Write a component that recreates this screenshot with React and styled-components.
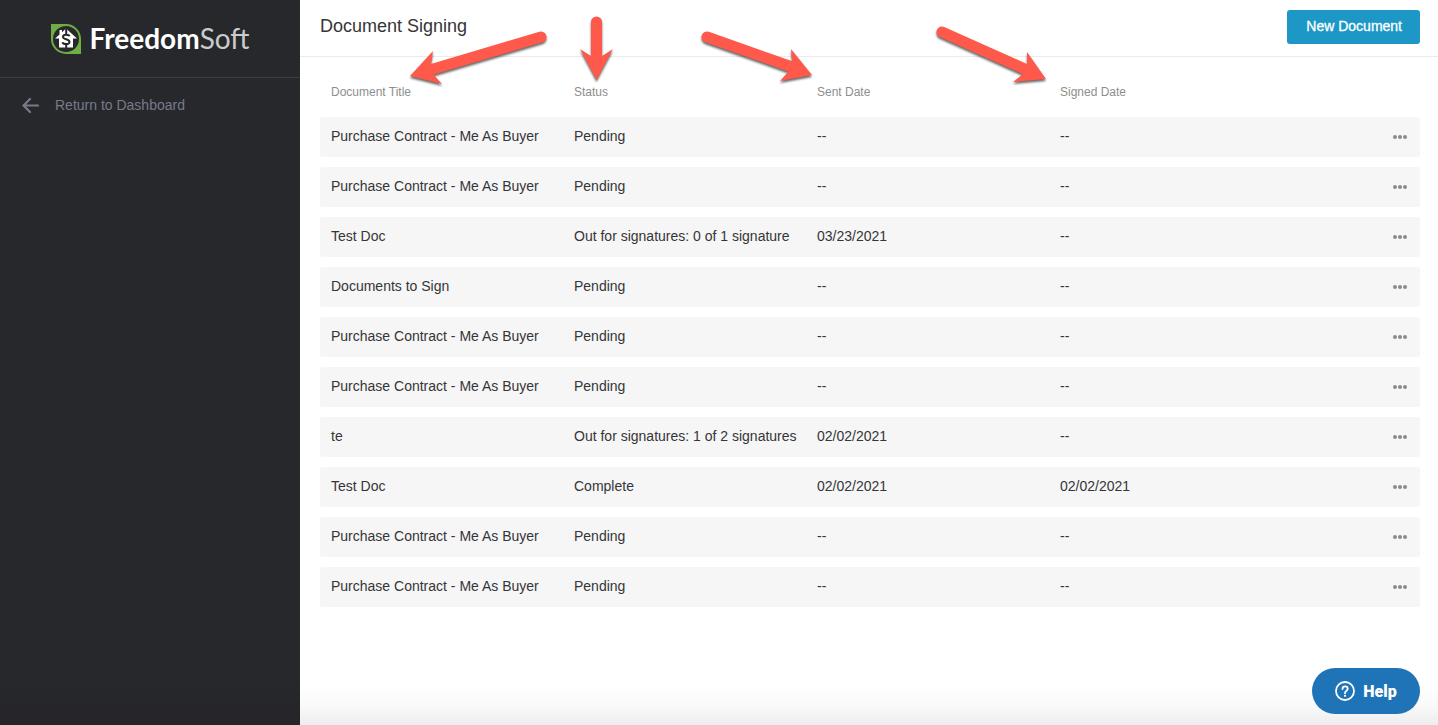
import styled, { createGlobalStyle } from 'styled-components'

const GlobalStyle = createGlobalStyle`
    * {
        box-sizing: border-box;
    }

    body {
        margin: 0;
        background: #fff;
        color: #353537;
        font-family: 'Liberation Sans', Arial, sans-serif;
        font-size: 14px;
    }
`

const Page = styled.div`
    display: flex;
    min-height: 100vh;
`

const Sidebar = styled.aside`
    flex: 0 0 300px;
    background: linear-gradient(to bottom, #27282c calc(100% - 40px), #252529);
`

const Brand = styled.a`
    display: flex;
    align-items: center;
    justify-content: center;
    gap: 9px;
    height: 78px;
    border-bottom: 1px solid #3d3e42;
    text-decoration: none;
`

const BrandName = styled.span`
    padding-bottom: 2px;
    font-family: Lato, sans-serif;
    font-size: 28px;
    font-weight: 700;
    color: #fff;
`

const BrandLight = styled.span`
    font-weight: 400;
    color: #cbcbcd;
`

const BackLink = styled.a`
    display: flex;
    align-items: center;
    gap: 16px;
    padding: 18px 22px;
    color: #767b8a;
    line-height: 18px;
    text-decoration: none;
`

const Main = styled.main`
    position: relative;
    flex: 1;
    min-width: 0;
    background: linear-gradient(to bottom, #fff calc(100% - 40px), #f9f9f9 calc(100% - 18px), #ededed);
`

const Header = styled.header`
    display: flex;
    align-items: center;
    justify-content: space-between;
    height: 57px;
    padding: 0 18px 2px 20px;
    border-bottom: 1px solid #ebebeb;
`

const Title = styled.h1`
    margin: 0;
    padding-bottom: 2px;
    font-size: 18px;
    font-weight: 400;
`

const NewButton = styled.button`
    height: 34px;
    padding: 0 18px 3px 19px;
    border: none;
    border-radius: 3px;
    background: #1d98c6;
    color: #fff;
    font: 14px 'Liberation Sans', Arial, sans-serif;
    -webkit-text-stroke: 0.3px #fff;
    cursor: pointer;
`

const Content = styled.div`
    padding: 10px 18px 100px 20px;
`

const Table = styled.table`
    width: 100%;
    table-layout: fixed;
    border-collapse: separate;
    border-spacing: 0 10px;
`

const HeadCell = styled.th`
    width: ${(props) => (props.$last ? '128px' : 'auto')};
    height: 30px;
    padding: 0 11px;
    color: #8e8e8e;
    font-size: 12px;
    font-weight: 400;
    text-align: left;
`

const Cell = styled.td`
    height: 40px;
    padding: 0 11px 2px;
    background: #f6f6f6;
    white-space: nowrap;

    &:first-child {
        border-radius: 3px 0 0 3px;
    }

    &:last-child {
        padding: 0 11px 0 0;
        border-radius: 0 3px 3px 0;
    }
`

const MenuButton = styled.button`
    display: flex;
    margin-left: auto;
    padding: 8px 2px;
    border: none;
    background: none;
    color: #8b8b8b;
    cursor: pointer;
`

const HelpButton = styled.button`
    position: fixed;
    right: 18px;
    bottom: 11px;
    display: flex;
    align-items: center;
    justify-content: center;
    gap: 8px;
    width: 108px;
    height: 46px;
    border: none;
    border-radius: 23px;
    background: #1f73b7;
    color: #fff;
    font: 900 16px Roboto, sans-serif;
    cursor: pointer;
`

const Arrows = styled.svg`
    position: absolute;
    top: 0;
    left: 0;
    pointer-events: none;
    filter: drop-shadow(0 2px 1px rgba(0, 0, 0, 0.6));
`

const documents = [
    { id: 1, title: 'Purchase Contract - Me As Buyer', status: 'Pending' },
    { id: 2, title: 'Purchase Contract - Me As Buyer', status: 'Pending' },
    { id: 3, title: 'Test Doc', status: 'Out for signatures: 0 of 1 signature', sent: '03/23/2021' },
    { id: 4, title: 'Documents to Sign', status: 'Pending' },
    { id: 5, title: 'Purchase Contract - Me As Buyer', status: 'Pending' },
    { id: 6, title: 'Purchase Contract - Me As Buyer', status: 'Pending' },
    { id: 7, title: 'te', status: 'Out for signatures: 1 of 2 signatures', sent: '02/02/2021' },
    { id: 8, title: 'Test Doc', status: 'Complete', sent: '02/02/2021', signed: '02/02/2021' },
    { id: 9, title: 'Purchase Contract - Me As Buyer', status: 'Pending' },
    { id: 10, title: 'Purchase Contract - Me As Buyer', status: 'Pending' },
]

const LogoMark = () => (
    <svg width="30" height="30" viewBox="0 0 30 30" aria-hidden="true">
        <path d="M0 0H15A15 15 0 0 1 30 15V30H15A15 15 0 0 1 0 15Z" fill="#70ad42" />
        <circle cx="15" cy="15" r="13" fill="#27282c" />
        <path d="M15 4.500L26 14.500H22V23.500H8V14.500H4L8.500 10.500V6H11V8.200Z" fill="#fff" />
        <path
            d="M18.500 12.200C18 10.600 12 9.800 12 13C12 15.800 18.500 14.800 18.500 18C18.500 21 12 20.500 11.500 18.200M15.200 4V10M15.200 20.500V24"
            fill="none"
            stroke="#27282c"
            strokeWidth="2"
        />
    </svg>
)

const BackIcon = () => (
    <svg width="17" height="16" viewBox="0 0 17 16" aria-hidden="true">
        <path d="M8 2L1.500 8.500L8 15M2 8.500H16" fill="none" stroke="currentColor" strokeWidth="2.200" strokeLinecap="round" />
    </svg>
)

const DotsIcon = () => (
    <svg width="14" height="4" viewBox="0 0 14 4" fill="currentColor" aria-hidden="true">
        <circle cx="2" cy="2" r="2" />
        <circle cx="7" cy="2" r="2" />
        <circle cx="12" cy="2" r="2" />
    </svg>
)

const HelpIcon = () => (
    <svg width="20" height="20" viewBox="0 0 20 20" fill="none" stroke="#fff" strokeWidth="1.800" aria-hidden="true">
        <circle cx="10" cy="10" r="9" />
        <path d="M7.500 8C7.500 4.500 12.700 4.700 12.700 7.800C12.700 9.900 10 9.700 10 12.300" strokeLinecap="round" />
        <circle cx="10" cy="14.800" r="1.100" fill="#fff" stroke="none" />
    </svg>
)

const ColumnArrows = () => (
    <Arrows width="760" height="100" viewBox="0 0 760 100" fill="#fe594a" stroke="#fe594a" aria-hidden="true">
        <g strokeWidth="11" strokeLinecap="round">
            <path d="M241 37L130 70" />
            <path d="M296.500 22V62" />
            <path d="M407 37L492 67" />
            <path d="M642 32L727 70" />
        </g>
        <g stroke="none">
            <path d="M110 76L133 51L131 64L133 74L142 84Z" />
            <path d="M296.500 80L280 49L291 56H302L313 49Z" />
            <path d="M512 75L491 49L492 62L489 71L480 81Z" />
            <path d="M746 79L727 52V65L723 74L713 82Z" />
        </g>
    </Arrows>
)

const App = () => {
    return (
        <>
            <GlobalStyle />
            <Page>
                <Sidebar>
                    <Brand href="#">
                        <LogoMark />
                        <BrandName>
                            Freedom<BrandLight>Soft</BrandLight>
                        </BrandName>
                    </Brand>
                    <BackLink href="#">
                        <BackIcon />
                        Return to Dashboard
                    </BackLink>
                </Sidebar>
                <Main>
                    <Header>
                        <Title>Document Signing</Title>
                        <NewButton type="button">New Document</NewButton>
                    </Header>
                    <Content>
                        <Table>
                            <thead>
                                <tr>
                                    <HeadCell>Document Title</HeadCell>
                                    <HeadCell>Status</HeadCell>
                                    <HeadCell>Sent Date</HeadCell>
                                    <HeadCell>Signed Date</HeadCell>
                                    <HeadCell $last aria-label="Actions" />
                                </tr>
                            </thead>
                            <tbody>
                                {documents.map((doc) => (
                                    <tr key={doc.id}>
                                        <Cell>{doc.title}</Cell>
                                        <Cell>{doc.status}</Cell>
                                        <Cell>{doc.sent || '--'}</Cell>
                                        <Cell>{doc.signed || '--'}</Cell>
                                        <Cell>
                                            <MenuButton type="button" aria-label="Document actions">
                                                <DotsIcon />
                                            </MenuButton>
                                        </Cell>
                                    </tr>
                                ))}
                            </tbody>
                        </Table>
                    </Content>
                    <ColumnArrows />
                </Main>
            </Page>
            <HelpButton type="button">
                <HelpIcon />
                Help
            </HelpButton>
        </>
    )
}

export default App
